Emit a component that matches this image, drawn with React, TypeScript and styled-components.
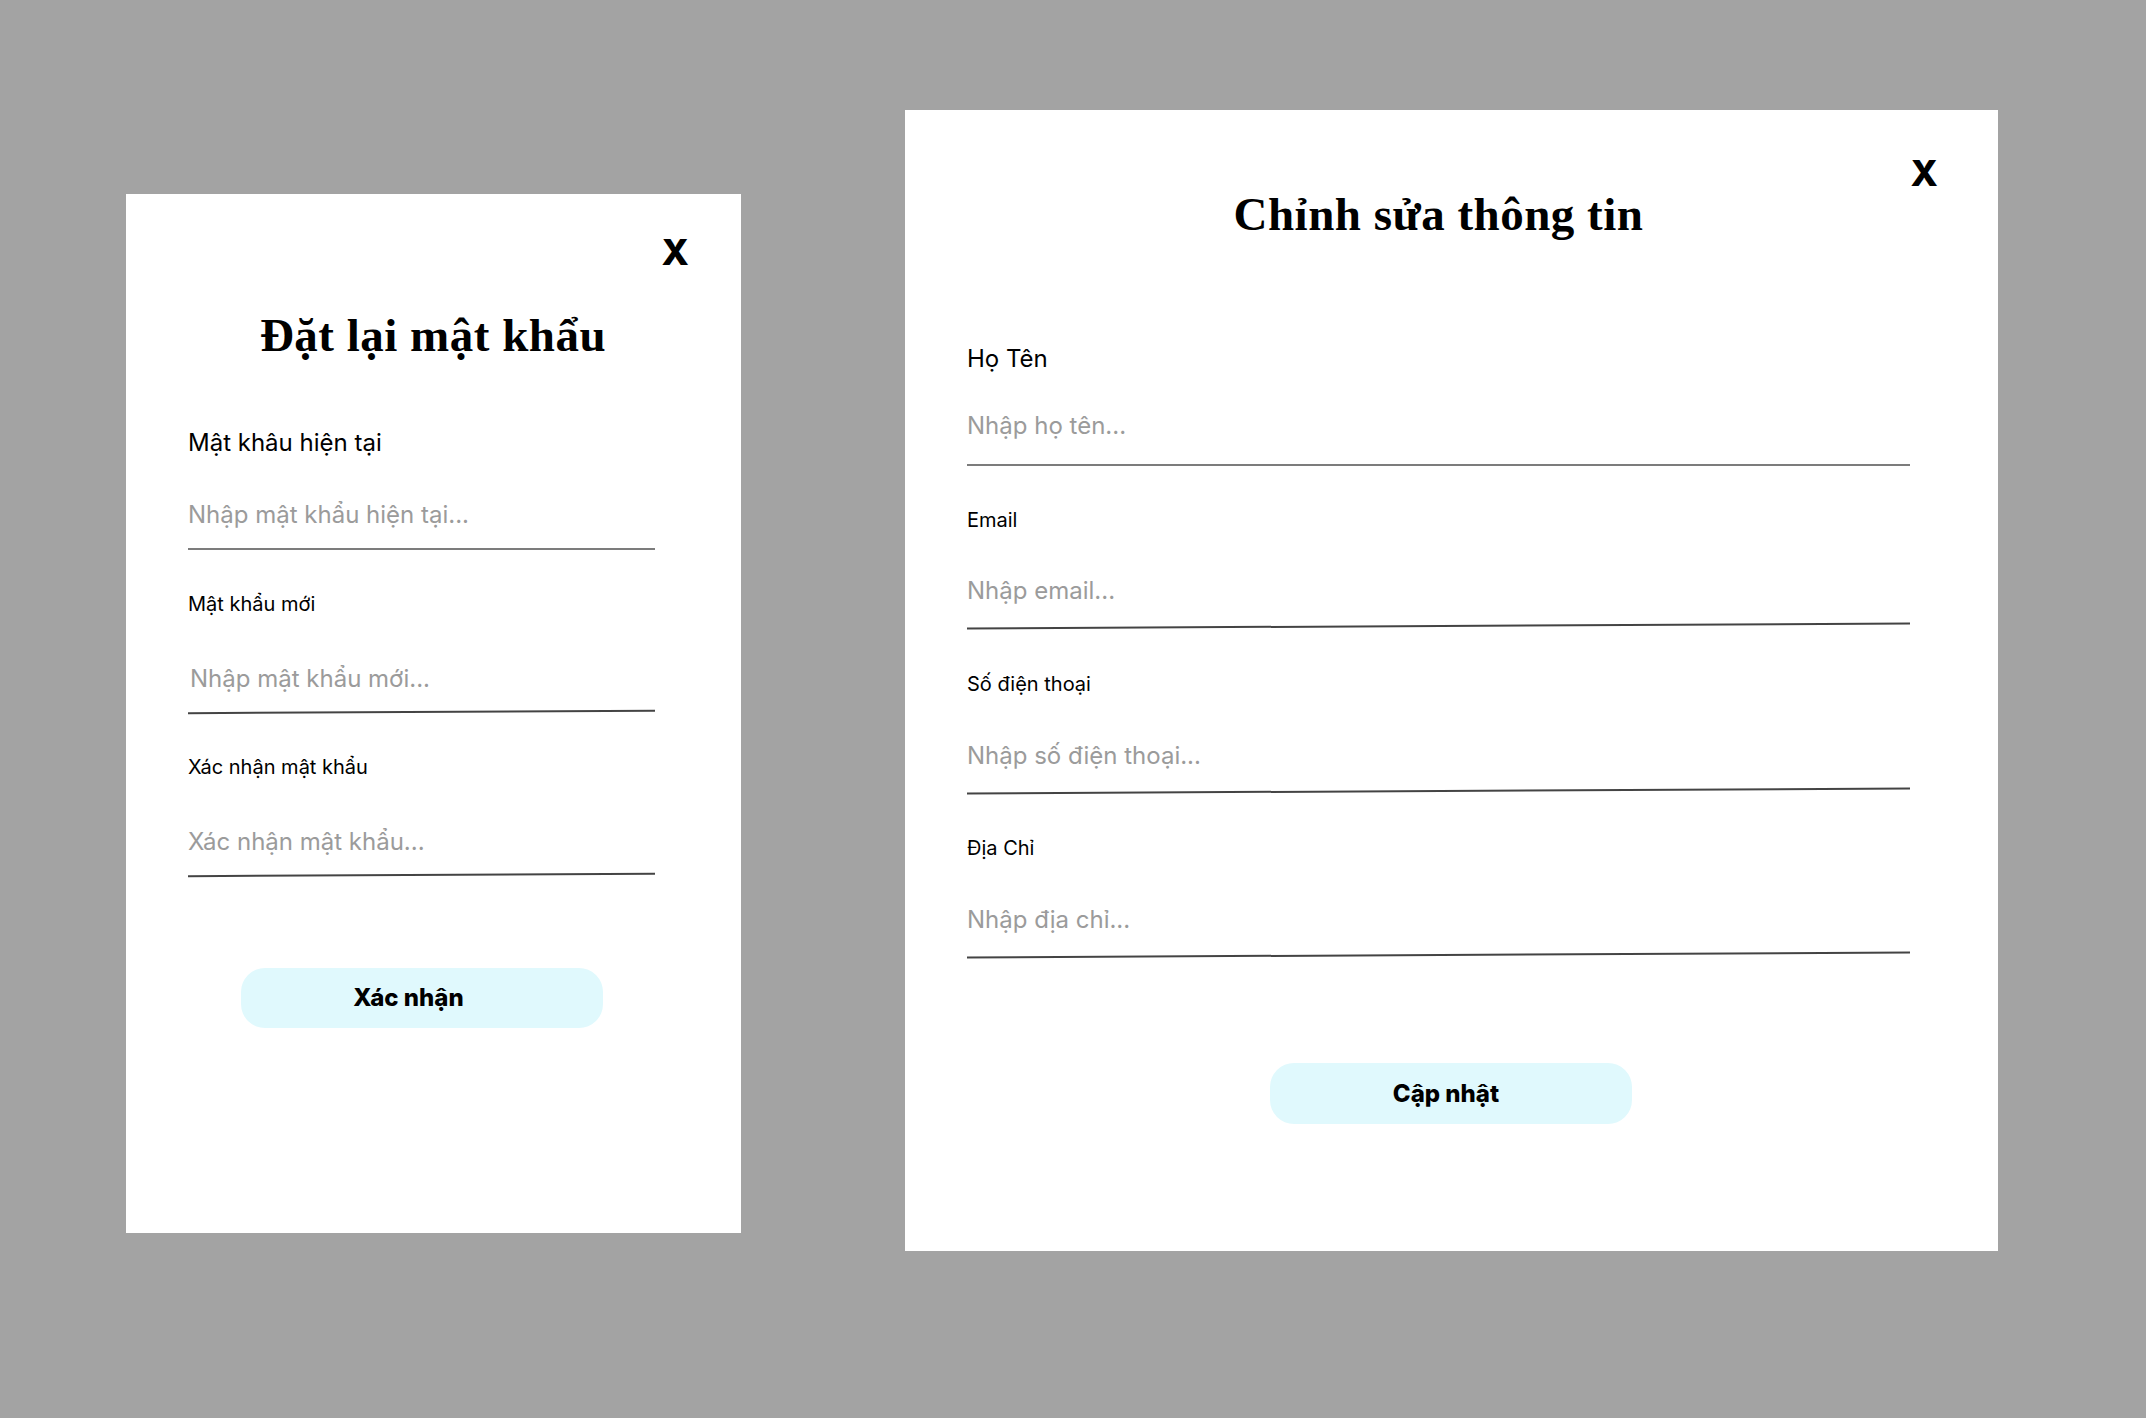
import React from 'react';
import styled, { createGlobalStyle } from 'styled-components';

const GlobalStyle = createGlobalStyle`
  html, body { margin: 0; padding: 0; }
  body {
    background: #a3a3a3;
    font-family: Inter, "Noto Sans", sans-serif;
    color: #000;
  }
  * { box-sizing: border-box; }
`;

const Page = styled.main`
  display: flex;
  align-items: flex-start;
  gap: 164px;
  min-height: 100vh;
  padding: 110px 0 0 126px;
  background: #a3a3a3;
`;

const Panel = styled.section<{
  $w: number;
  $h: number;
  $offset: number;
  $padTop: number;
  $content: number;
}>`
  position: relative;
  display: flex;
  flex-direction: column;
  flex: none;
  width: ${(p) => p.$w}px;
  height: ${(p) => p.$h}px;
  margin-top: ${(p) => p.$offset}px;
  padding: ${(p) => p.$padTop}px ${(p) => p.$w - 62 - p.$content}px 0 62px;
  background: #ffffff;
`;

const CloseButton = styled.button<{ $top: number; $right: number }>`
  position: absolute;
  top: ${(p) => p.$top}px;
  right: ${(p) => p.$right}px;
  margin: 0;
  padding: 0;
  border: none;
  background: transparent;
  font-family: Inter, "Noto Sans", sans-serif;
  font-weight: 800;
  font-size: 36px;
  line-height: 36px;
  color: #000;
  cursor: pointer;
`;

const Title = styled.h1<{ $gap: number; $shift: number }>`
  margin: 0 0 ${(p) => p.$gap}px;
  padding-left: ${(p) => p.$shift}px;
  font-family: "Liberation Serif", "Times New Roman", serif;
  font-weight: 700;
  font-size: 47px;
  line-height: 56px;
  letter-spacing: 0.5px;
  text-align: center;
  white-space: nowrap;
  color: #000;
`;

const Form = styled.form`
  display: flex;
  flex-direction: column;
`;

const Field = styled.div<{ $gap: number }>`
  display: flex;
  flex-direction: column;
  margin-top: ${(p) => p.$gap}px;
`;

const Label = styled.label<{ $large: boolean; $gap: number }>`
  display: block;
  margin-bottom: ${(p) => p.$gap}px;
  font-family: Inter, "Noto Sans", sans-serif;
  font-weight: 400;
  font-size: ${(p) => (p.$large ? 24 : 20)}px;
  line-height: ${(p) => (p.$large ? 28 : 24)}px;
  color: #000;
  white-space: nowrap;
`;

const Input = styled.input<{ $indent: number }>`
  display: block;
  width: 100%;
  height: 30px;
  margin: 0;
  padding: 0 0 0 ${(p) => p.$indent}px;
  border: none;
  outline: none;
  background: transparent;
  font-family: Inter, "Noto Sans", sans-serif;
  font-size: 24px;
  line-height: 30px;
  color: #000;

  &::placeholder {
    color: #9b9b9b;
    opacity: 1;
  }
`;

const Rule = styled.div<{ $gap: number; $tilt: number }>`
  height: 2px;
  margin-top: ${(p) => p.$gap}px;
  background: ${(p) => (p.$tilt ? '#444' : '#7c7c7c')};
  transform: rotate(${(p) => p.$tilt}deg);
`;

const ButtonRow = styled.div<{ $gap: number; $shift: number }>`
  display: flex;
  justify-content: center;
  margin-top: ${(p) => p.$gap}px;
  padding-left: ${(p) => p.$shift}px;
`;

const SubmitButton = styled.button<{ $h: number; $nudge: number }>`
  width: 362px;
  height: ${(p) => p.$h}px;
  margin: 0;
  padding: 0 ${(p) => p.$nudge}px 0 0;
  border: none;
  border-radius: 24px;
  background: #e0f9fd;
  font-family: Inter, "Noto Sans", sans-serif;
  font-weight: 800;
  font-size: 24px;
  line-height: ${(p) => p.$h}px;
  color: #000;
  cursor: pointer;
`;

type FieldDef = {
  label: string;
  placeholder: string;
  large: boolean;
  gap: number;
  labelGap: number;
  ruleGap: number;
  tilt: number;
  indent?: number;
};

const passwordFields: FieldDef[] = [
  { label: 'Mật khâu hiện tại', placeholder: 'Nhập mật khẩu hiện tại...', large: true, gap: 0, labelGap: 43.5, ruleGap: 17.5, tilt: 0 },
  { label: 'Mật khẩu mới', placeholder: 'Nhập mật khẩu mới...', large: false, gap: 42, labelGap: 48.5, ruleGap: 16.5, tilt: -0.28, indent: 2 },
  { label: 'Xác nhận mật khẩu', placeholder: 'Xác nhận mật khẩu...', large: false, gap: 42.5, labelGap: 48, ruleGap: 17, tilt: -0.28 },
];

const profileFields: FieldDef[] = [
  { label: 'Họ Tên', placeholder: 'Nhập họ tên...', large: true, gap: 0, labelGap: 38.5, ruleGap: 23, tilt: 0 },
  { label: 'Email', placeholder: 'Nhập email...', large: false, gap: 41.5, labelGap: 44.5, ruleGap: 18.5, tilt: -0.3 },
  { label: 'Số điện thoại', placeholder: 'Nhập số điện thoại...', large: false, gap: 45, labelGap: 45.5, ruleGap: 18.5, tilt: -0.3 },
  { label: 'Địa Chỉ', placeholder: 'Nhập địa chỉ...', large: false, gap: 44, labelGap: 45, ruleGap: 19, tilt: -0.3 },
];

const Fields: React.FC<{ fields: FieldDef[]; prefix: string }> = ({ fields, prefix }) => (
  <Form onSubmit={(e) => e.preventDefault()}>
    {fields.map((f, i) => (
      <Field key={f.label} $gap={f.gap}>
        <Label htmlFor={`${prefix}-${i}`} $large={f.large} $gap={f.labelGap}>
          {f.label}
        </Label>
        <Input id={`${prefix}-${i}`} placeholder={f.placeholder} $indent={f.indent ?? 0} />
        <Rule $gap={f.ruleGap} $tilt={f.tilt} />
      </Field>
    ))}
  </Form>
);

export default function App() {
  return (
    <>
      <GlobalStyle />
      <Page>
        <Panel $w={615} $h={1039} $offset={84} $padTop={112.5} $content={467}>
          <CloseButton $top={40} $right={52} aria-label="Đóng">X</CloseButton>
          <Title $gap={66} $shift={23}>Đặt lại mật khẩu</Title>
          <Fields fields={passwordFields} prefix="pw" />
          <ButtonRow $gap={92} $shift={0}>
            <SubmitButton $h={60} $nudge={26}>Xác nhận</SubmitButton>
          </ButtonRow>
        </Panel>
        <Panel $w={1093} $h={1141} $offset={0} $padTop={75.5} $content={943}>
          <CloseButton $top={45} $right={60} aria-label="Đóng">X</CloseButton>
          <Title $gap={103} $shift={0}>Chỉnh sửa thông tin</Title>
          <Fields fields={profileFields} prefix="pf" />
          <ButtonRow $gap={107.5} $shift={25}>
            <SubmitButton $h={61} $nudge={10}>Cập nhật</SubmitButton>
          </ButtonRow>
        </Panel>
      </Page>
    </>
  );
}
